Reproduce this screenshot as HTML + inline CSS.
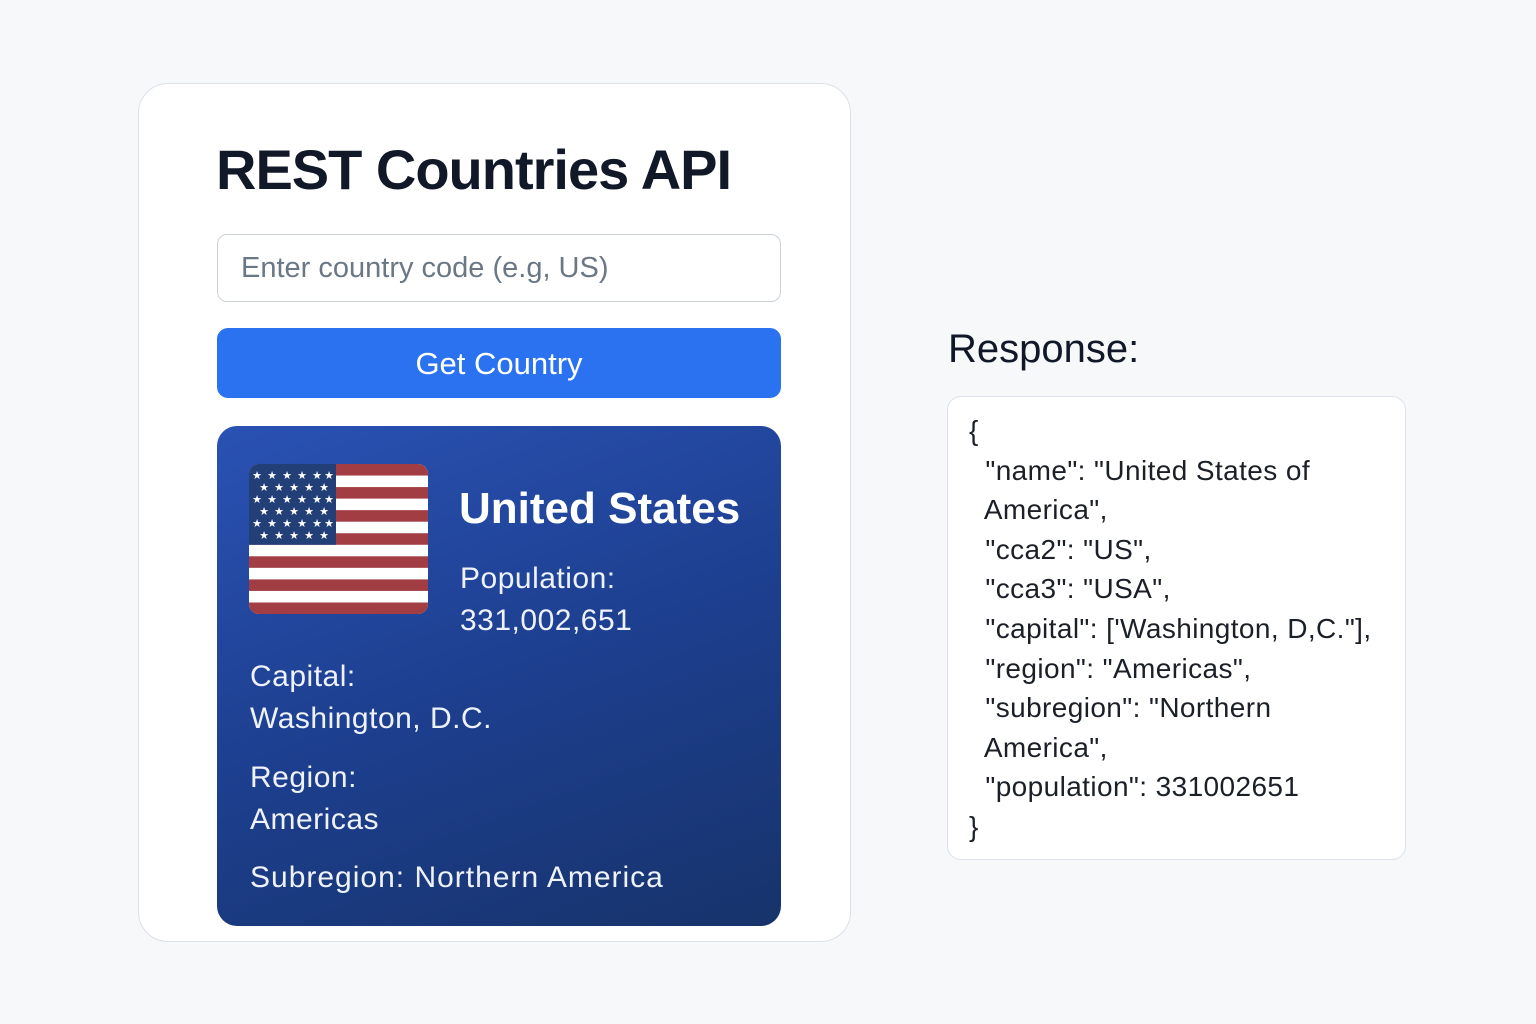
<!DOCTYPE html>
<html><head><meta charset="utf-8"><style>
body{margin:0;width:1536px;height:1024px;background:#f7f8fa;font-family:"Liberation Sans",sans-serif;position:relative;overflow:hidden}
.panel{position:absolute;left:138px;top:83px;width:713px;height:859px;background:#fff;border:1px solid #dde1e7;border-radius:30px;box-sizing:border-box}
h1{position:absolute;left:216px;top:137px;margin:0;font-size:56px;font-weight:bold;color:#111827;letter-spacing:-1px}
.inp{position:absolute;left:217px;top:234px;width:564px;height:68px;border:1px solid #ccd2da;border-radius:10px;box-sizing:border-box;font-size:29px;color:#6b7785;padding:17px 0 0 23px}
.btn{position:absolute;left:217px;top:328px;width:564px;height:70px;background:#2a72f0;border-radius:11px;color:#fff;font-size:31px;text-align:center;line-height:72px}
.card{position:absolute;left:217px;top:426px;width:564px;height:500px;border-radius:20px;background:linear-gradient(160deg,#2a52b4 0%,#1d3f8f 50%,#17336b 100%);color:#fff}
.t{position:absolute;font-size:30px;color:#eef2fb;line-height:42px;letter-spacing:0.5px}
.flag{position:absolute;left:32px;top:38px;width:179px;height:150px;border-radius:10px;overflow:hidden}
.resp{position:absolute;left:948px;top:327px;font-size:40px;color:#111827}
.box{position:absolute;left:947px;top:396px;width:459px;height:464px;background:#fff;border:1px solid #dde1e7;border-radius:14px;box-sizing:border-box}
.code{position:absolute;left:969px;top:411px;font-size:28px;line-height:39.6px;color:#1b1f27;white-space:pre;letter-spacing:0.4px}
</style></head><body>
<div class="panel"></div>
<h1>REST Countries API</h1>
<div class="inp">Enter country code (e.g, US)</div>
<div class="btn">Get Country</div>
<div class="card">
 <svg class="flag" width="179" height="150" viewBox="0 0 179 150">
  <rect width="179" height="150" fill="#fff"/>
  <g fill="#a23d44">
   <rect y="0" width="179" height="11.54"/><rect y="23.08" width="179" height="11.54"/><rect y="46.15" width="179" height="11.54"/><rect y="69.23" width="179" height="11.54"/><rect y="92.3" width="179" height="11.54"/><rect y="115.4" width="179" height="11.54"/><rect y="138.5" width="179" height="11.54"/>
  </g>
  <rect width="87" height="80.8" fill="#233f78"/>
  <g fill="#fff" font-size="11" font-family="DejaVu Sans" text-anchor="middle">
   <text x="8" y="15">★</text><text x="23" y="15">★</text><text x="38" y="15">★</text><text x="53" y="15">★</text><text x="68" y="15">★</text><text x="80" y="15">★</text>
   <text x="15" y="27">★</text><text x="30" y="27">★</text><text x="45" y="27">★</text><text x="60" y="27">★</text><text x="75" y="27">★</text>
   <text x="8" y="39">★</text><text x="23" y="39">★</text><text x="38" y="39">★</text><text x="53" y="39">★</text><text x="68" y="39">★</text><text x="80" y="39">★</text>
   <text x="15" y="51">★</text><text x="30" y="51">★</text><text x="45" y="51">★</text><text x="60" y="51">★</text><text x="75" y="51">★</text>
   <text x="8" y="63">★</text><text x="23" y="63">★</text><text x="38" y="63">★</text><text x="53" y="63">★</text><text x="68" y="63">★</text><text x="80" y="63">★</text>
   <text x="15" y="75">★</text><text x="30" y="75">★</text><text x="45" y="75">★</text><text x="60" y="75">★</text><text x="75" y="75">★</text>
  </g>
 </svg>
 <div class="t" style="left:242px;top:62px;font-size:44px;font-weight:bold;color:#fff;letter-spacing:0">United States</div>
 <div class="t" style="left:243px;top:132px">Population:<br>331,002,651</div>
 <div class="t" style="left:33px;top:230px">Capital:<br>Washington, D.C.</div>
 <div class="t" style="left:33px;top:331px">Region:<br>Americas</div>
 <div class="t" style="left:33px;top:431px;letter-spacing:1px">Subregion: Northern America</div>
</div>
<div class="resp">Response:</div>
<div class="box"></div>
<div class="code">{
  "name": "United States of
  America",
  "cca2": "US",
  "cca3": "USA",
  "capital": ['Washington, D,C."],
  "region": "Americas",
  "subregion": "Northern
  America",
  "population": 331002651
}</div>
</body></html>
